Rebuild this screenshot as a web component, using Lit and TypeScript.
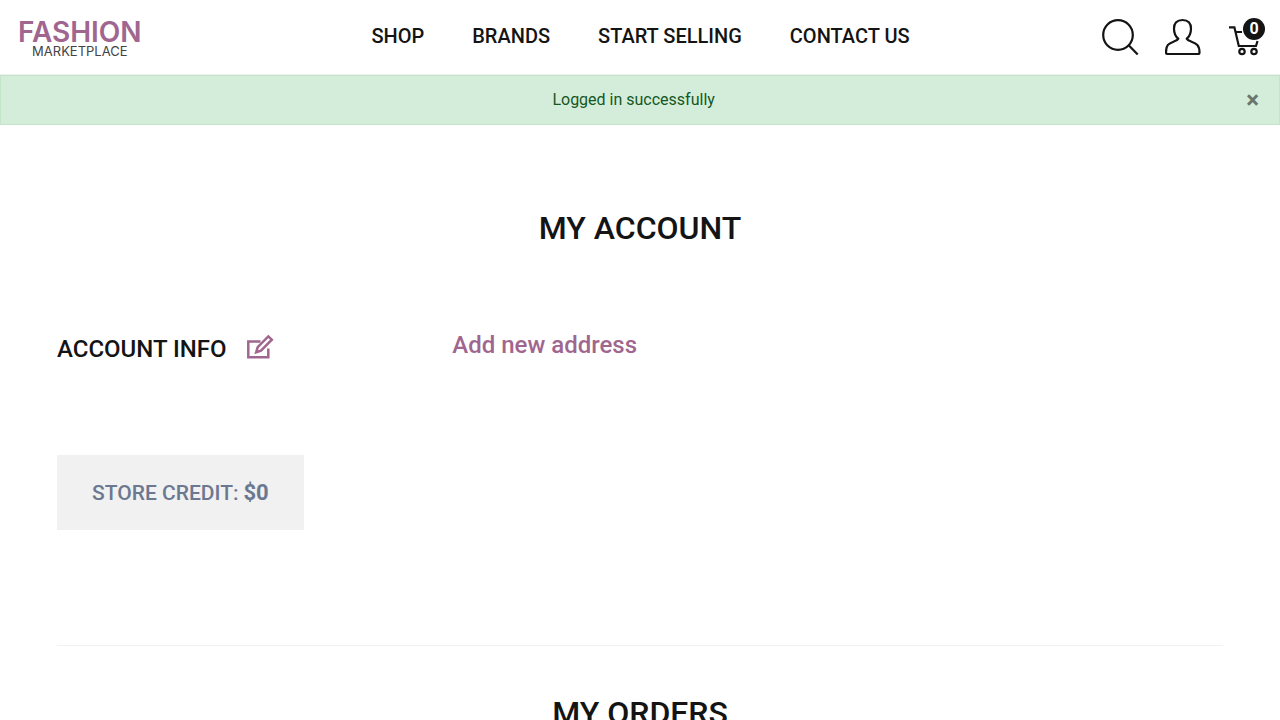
import { LitElement, html, css } from "lit";
import { customElement, state } from "lit/decorators.js";

const links = ["Shop", "Brands", "Start selling", "Contact us"];

@customElement("shop-header")
class ShopHeader extends LitElement {
  static styles = css`
    :host { display: block; }
    .bar {
      display: grid;
      grid-template-columns: 1fr auto 1fr;
      align-items: center;
      height: 74px;
      padding: 0 15px 0 16px;
      border-bottom: 1px solid #eee;
      background: #fff;
    }
    a { color: #141414; text-decoration: none; }
    .logo {
      justify-self: start;
      display: flex;
      flex-direction: column;
      align-items: center;
      padding: 4px 2px 0;
      font-family: Inter, sans-serif;
    }
    .brand { font-size: 28px; line-height: 24px; font-weight: 600; color: #a0668f; }
    .sub { font-size: 13px; line-height: 14px; color: #444; }
    nav { display: flex; gap: 48px; }
    nav a {
      font-size: 20px;
      line-height: 24px;
      font-weight: 500;
      text-transform: uppercase;
      padding-bottom: 2px;
    }
    .tools { justify-self: end; display: flex; gap: 26px; align-items: center; }
    .tools a { display: block; position: relative; height: 38px; }
    svg { display: block; fill: none; stroke: #141414; stroke-width: 2.2; }
    .count {
      position: absolute;
      top: 0;
      right: 0;
      width: 22px;
      height: 22px;
      border-radius: 50%;
      background: #141414;
      color: #fff;
      font-size: 16px;
      line-height: 22px;
      font-weight: 700;
      text-align: center;
    }
  `;

  render() {
    return html`
      <header class="bar">
        <a class="logo" href="#">
          <span class="brand">FASHION</span>
          <span class="sub">MARKETPLACE</span>
        </a>
        <nav>${links.map((l) => html`<a href="#">${l}</a>`)}</nav>
        <div class="tools">
          <a href="#" aria-label="Search">
            <svg width="38" height="38" viewBox="0 0 38 38">
              <circle cx="17" cy="17" r="14.800" />
              <path d="M27.200 26.800 36.700 36.600" />
            </svg>
          </a>
          <a href="#" aria-label="Account">
            <svg width="37" height="38" viewBox="1 0 37 38" stroke-linejoin="round">
              <path d="M18.500 2C12.800 2 10 5.200 10 10.500c0 4.600 1.800 8.300 4.300 10.200-.7 1.600-2.300 2.100-4.800 3C4.600 25.400 2 27 2 34.500c0 .9.500 1.500 1.500 1.500h30.500c1 0 1.500-.6 1.500-1.500 0-7.500-3.100-9.100-8-10.800-2.500-.9-4.100-1.400-4.800-3C25.200 18.800 27 15.100 27 10.500 27 5.200 24.200 2 18.500 2Z" />
            </svg>
          </a>
          <a href="#" aria-label="Cart">
            <svg width="37" height="38" viewBox="0 0 37 38">
              <path d="M1 9.300h5.400L10.800 28h17.200l1.500-5M8 14h6" />
              <circle cx="14" cy="33.500" r="2.700" />
              <circle cx="26" cy="33.500" r="2.700" />
            </svg>
            <span class="count">0</span>
          </a>
        </div>
      </header>
    `;
  }
}

@customElement("app-root")
class AppRoot extends LitElement {
  static styles = css`
    :host {
      display: block;
      font-family: Roboto, sans-serif;
      color: #141414;
      background: #fff;
    }
    .alert {
      display: flex;
      padding: 12px 20px;
      border: 1px solid #c3e6cb;
      background: #d4edda;
      color: #155724;
      font-size: 16px;
      line-height: 24px;
    }
    .message { flex: 1; text-align: center; }
    .close {
      padding: 0;
      border: 0;
      background: none;
      color: #6a766d;
      font: 700 24px/24px Roboto, sans-serif;
      cursor: pointer;
    }
    main { padding: 79px 57px 0; }
    h1, h2, h3 { margin: 0; font-weight: 500; text-transform: uppercase; }
    h1, h2 { font-size: 32px; line-height: 48px; text-align: center; }
    h3 { font-size: 24px; line-height: 30px; }
    .columns {
      display: grid;
      grid-template-columns: repeat(3, 1fr);
      gap: 20px;
      align-items: start;
      margin-top: 78px;
      padding-bottom: 115px;
      border-bottom: 1px solid #f1f1f1;
    }
    .title { display: flex; align-items: center; gap: 20px; padding-top: 4px; }
    .title a { display: block; }
    .title svg { display: block; fill: none; stroke: #a0668f; stroke-width: 2.500; }
    .credit {
      display: flex;
      align-items: baseline;
      gap: 5px;
      width: fit-content;
      margin-top: 91px;
      padding: 26px 35px 25px;
      background: #f1f1f1;
      color: #6b7890;
      font-size: 21px;
      line-height: 24px;
      font-weight: 500;
      text-transform: uppercase;
    }
    .credit strong { font-size: 22px; font-weight: 700; }
    .add {
      font-size: 24px;
      line-height: 30px;
      font-weight: 500;
      color: #a0668f;
      text-decoration: none;
    }
    h2 { padding-top: 43px; }
  `;

  @state() private notice = true;

  render() {
    return html`
      <shop-header></shop-header>
      ${this.notice
        ? html`<div class="alert" role="alert">
            <span class="message">Logged in successfully</span>
            <button class="close" type="button" aria-label="Close" @click=${() => (this.notice = false)}>×</button>
          </div>`
        : null}
      <main>
        <h1>My account</h1>
        <section class="columns">
          <div>
            <div class="title">
              <h3>Account info</h3>
              <a href="#" aria-label="Edit account info">
                <svg width="28" height="30" viewBox="1 0 28 30">
                  <path d="M14.500 7.500H2.300v15.800h20V14.500" />
                  <path d="M22.300 2.400 25.800 5.700 15 16.600l-4.800 1.600 1.500-5Z" />
                </svg>
              </a>
            </div>
            <div class="credit"><span>Store credit:</span><strong>$0</strong></div>
          </div>
          <a class="add" href="#">Add new address</a>
        </section>
        <h2>My orders</h2>
      </main>
    `;
  }
}
